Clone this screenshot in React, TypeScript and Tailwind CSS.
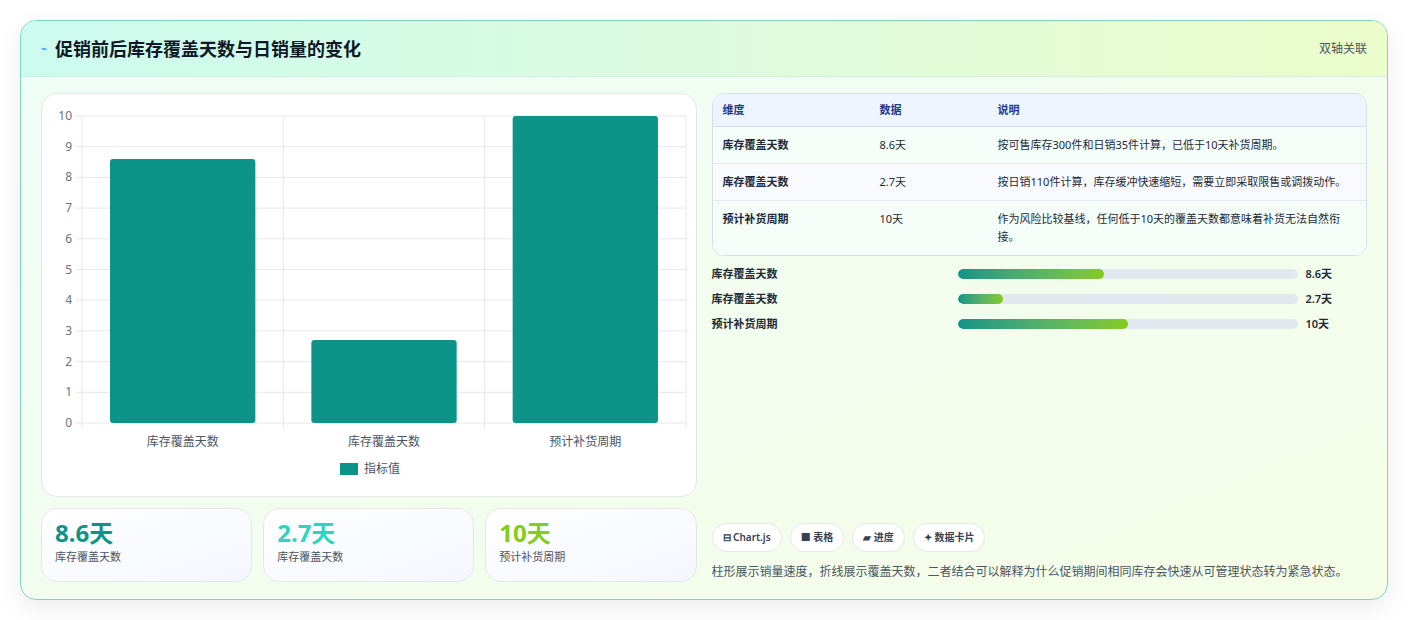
import React from "react";

const font = { fontFamily: '"Noto Sans", "Noto Sans CJK SC", sans-serif' };

const rows = [
  { k: "库存覆盖天数", v: "8.6天", d: "按可售库存300件和日销35件计算，已低于10天补货周期。" },
  { k: "库存覆盖天数", v: "2.7天", d: "按日销110件计算，库存缓冲快速缩短，需要立即采取限售或调拨动作。" },
  { k: "预计补货周期", v: "10天", d: "作为风险比较基线，任何低于10天的覆盖天数都意味着补货无法自然衔接。" },
];

const bars = [
  { k: "库存覆盖天数", n: 8.6, t: "8.6天" },
  { k: "库存覆盖天数", n: 2.7, t: "2.7天" },
  { k: "预计补货周期", n: 10, t: "10天" },
];

function Chart() {
  const top = 22, bottom = 329, left = 40, right = 644;
  const y = (v: number) => bottom - ((bottom - top) * v) / 10;
  const colW = (right - left) / 3;
  return (
    <svg width="656" height="404" className="block">
      {Array.from({ length: 11 }, (_, i) => (
        <g key={i}>
          <line x1={left - 6} x2={right} y1={y(i)} y2={y(i)} stroke="#e5e7eb" />
          <text x={left - 10} y={y(i) + 4} textAnchor="end" fontSize="12" fill="#6b7280" style={font}>{i}</text>
        </g>
      ))}
      {[0, 1, 2, 3].map((i) => (
        <line key={i} x1={left + colW * i} x2={left + colW * i} y1={top} y2={bottom + 6} stroke="#e5e7eb" />
      ))}
      {bars.map((b, i) => (
        <g key={i}>
          <rect x={left + colW * i + 28} y={y(b.n)} width={colW - 56} height={bottom - y(b.n)} rx="3" fill="#0d9488" />
          <text x={left + colW * (i + 0.5)} y={352} textAnchor="middle" fontSize="12" fill="#4b5563" style={font}>{b.k}</text>
        </g>
      ))}
      <rect x="298" y="369" width="18" height="12" fill="#0d9488" />
      <text x="322" y="379" fontSize="12" fill="#4b5563" style={font}>指标值</text>
    </svg>
  );
}

export default function App() {
  return (
    <div className="w-[1408px] h-[620px] bg-white p-5" style={font}>
      <div className="h-[580px] rounded-2xl border border-[#7dd3c0] shadow-[0_8px_24px_rgba(0,0,0,0.08)] overflow-hidden bg-gradient-to-br from-[#effdf8] to-[#f5fde6] flex flex-col">
        <div className="h-[56px] shrink-0 flex items-center justify-between px-5 bg-gradient-to-r from-[#ccfbef] to-[#ecfccb] border-b border-[#d1f0e4]">
          <div className="flex items-center gap-2">
            <span className="text-[10px] text-[#3b82f6]">⌁</span>
            <h1 className="text-lg font-bold text-[#111827]">促销前后库存覆盖天数与日销量的变化</h1>
          </div>
          <span className="text-xs text-[#4b5563]">双轴关联</span>
        </div>
        <div className="flex-1 grid grid-cols-2 gap-[15px] px-5 pt-4 pb-5">
          <div className="flex flex-col gap-[11px]">
            <div className="h-[404px] rounded-2xl bg-white border border-[#e5e7eb]">
              <Chart />
            </div>
            <div className="grid grid-cols-3 gap-[11px]">
              {[
                ["8.6天", "text-[#0d9488]"],
                ["2.7天", "text-[#2dd4bf]"],
                ["10天", "text-[#84cc16]"],
              ].map(([v, c], i) => (
                <div key={i} className="h-[74px] rounded-2xl bg-gradient-to-br from-white to-[#f3f7fd] border border-[#e5e7eb] px-[13px] pt-2">
                  <div className={`text-2xl font-bold ${c}`}>{v}</div>
                  <div className="text-[11px] text-[#4b5563]">{bars[i].k}</div>
                </div>
              ))}
            </div>
          </div>
          <div className="flex flex-col">
            <div className="rounded-xl border border-[#d6dee8] overflow-hidden text-[11px]">
              <div className="grid grid-cols-[157px_118px_1fr] bg-[#eef5fe] border-b border-[#d6dee8] h-[33px] items-center px-[10px] text-[#1e3a8a] font-semibold">
                <span>维度</span><span>数据</span><span>说明</span>
              </div>
              {rows.map((r, i) => (
                <div key={i} className={`grid grid-cols-[157px_118px_1fr] px-[10px] py-[9px] leading-[18px] text-[#1f2937] ${i < 2 ? "border-b border-[#e5e9f0]" : ""} ${i === 1 ? "bg-[#f8fafe]" : "bg-[#f4fdf7]"}`}>
                  <span className="font-semibold">{r.k}</span>
                  <span>{r.v}</span>
                  <span className="pr-2">{r.d}</span>
                </div>
              ))}
            </div>
            <div className="mt-[11px] flex flex-col gap-[11px]">
              {bars.map((b, i) => (
                <div key={i} className="flex items-center h-[14px] text-[11px] font-semibold text-[#1f2937]">
                  <span className="w-[246px]">{b.k}</span>
                  <div className="w-[340px] h-[10px] rounded-full bg-[#e2e8f0] overflow-hidden">
                    <div className="h-full rounded-full bg-gradient-to-r from-[#0d9488] to-[#84cc16]" style={{ width: `${(b.n / 20) * 100}%` }} />
                  </div>
                  <span className="ml-2">{b.t}</span>
                </div>
              ))}
            </div>
            <div className="mt-auto flex gap-2">
              {["⊟ Chart.js", "■ 表格", "▰ 进度", "✦ 数据卡片"].map((t) => (
                <span key={t} className="h-[29px] px-[10px] rounded-full bg-white border border-[#e5e7eb] text-[10px] font-semibold text-[#374151] flex items-center">{t}</span>
              ))}
            </div>
            <p className="mt-[9px] text-xs leading-[21px] text-[#4b5563]">柱形展示销量速度，折线展示覆盖天数，二者结合可以解释为什么促销期间相同库存会快速从可管理状态转为紧急状态。</p>
          </div>
        </div>
      </div>
    </div>
  );
}
